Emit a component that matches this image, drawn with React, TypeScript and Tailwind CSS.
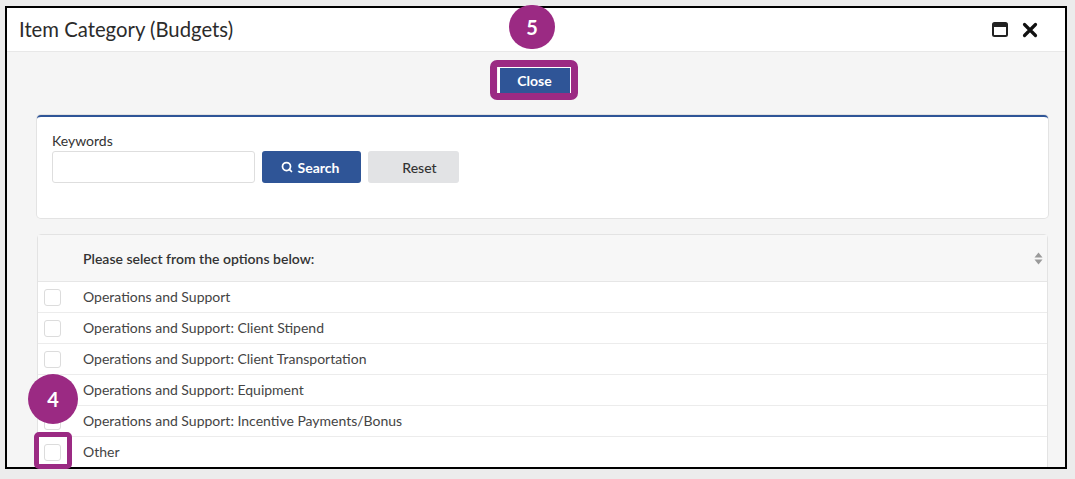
import { Search } from 'lucide-react';

const rows = [
  'Operations and Support',
  'Operations and Support: Client Stipend',
  'Operations and Support: Client Transportation',
  'Operations and Support: Equipment',
  'Operations and Support: Incentive Payments/Bonus',
  'Other',
];

function MaximizeIcon() {
  return (
    <svg width="16" height="15" viewBox="0 0 16 15" className="text-[#222]">
      <rect x="1" y="1" width="14" height="13" rx="1.5" fill="none" stroke="currentColor" strokeWidth="2" />
      <rect x="1" y="1" width="14" height="4" fill="currentColor" />
    </svg>
  );
}

function CloseIcon() {
  return (
    <svg width="16" height="16" viewBox="0 0 16 16" className="text-[#111]">
      <path d="M2.5 2.5 L13.5 13.5 M13.5 2.5 L2.5 13.5" stroke="currentColor" strokeWidth="3.2" strokeLinecap="round" />
    </svg>
  );
}

function SortIcon() {
  return (
    <svg width="9" height="13" viewBox="0 0 9 13" className="text-[#9a9a9a]">
      <path d="M4.5 0.5 L8.5 5.5 L0.5 5.5 Z" fill="currentColor" />
      <path d="M4.5 12.5 L8.5 7.5 L0.5 7.5 Z" fill="currentColor" />
    </svg>
  );
}

function Badge({ n, className }: { n: string; className: string }) {
  return (
    <div
      className={`absolute rounded-full bg-[#9b2a83] text-white flex items-center justify-center font-bold text-[20px] ${className}`}
    >
      {n}
    </div>
  );
}

export default function App() {
  return (
    <div
      className="relative w-[1075px] h-[479px] bg-[#ececec] overflow-hidden pt-[6px] pl-[5px]"
      style={{ fontFamily: 'Lato, "Noto Sans", sans-serif' }}
    >
      <div className="w-[1062px] h-[463px] border-2 border-black bg-white flex flex-col overflow-hidden">
        {/* header */}
        <div className="h-[44px] shrink-0 flex items-center justify-between pl-[12px] pr-[27px] border-b border-[#e8e8e8] bg-white">
          <h1 className="text-[20.3px] text-[#2b2b2b] leading-none pb-[1px]">Item Category (Budgets)</h1>
          <div className="flex items-center gap-[14px]">
            <MaximizeIcon />
            <CloseIcon />
          </div>
        </div>

        {/* body */}
        <div className="flex-1 bg-[#f5f5f5] pt-[16px]">
          <div className="flex justify-center pr-[3px]">
            <button className="w-[70px] h-[25px] bg-[#2f5597] text-white text-[14px] font-bold ring-2 ring-white leading-none">
              Close
            </button>
          </div>

          <div className="pl-[30px] pr-[17px]">
            <div className="mt-[22px] h-[103px] bg-white rounded-[4px] border-t-2 border-[#2f5597] shadow-[0_0_0_1px_#e3e3e3] px-[15px] pt-[14px]">
              <label className="block text-[14px] leading-[20px] text-[#333]">Keywords</label>
              <div className="flex items-center gap-[7px]">
                <input className="w-[203px] h-[32px] bg-white border border-[#dedede] rounded-[3px] outline-none" />
                <button className="w-[99px] h-[32px] bg-[#2f5597] rounded-[3px] text-white text-[14px] font-bold flex items-center justify-center gap-[5px] pr-[3px]">
                  <Search size={12} strokeWidth={3.5} />
                  Search
                </button>
                <button className="w-[91px] h-[32px] bg-[#e2e3e5] rounded-[3px] text-[#333] text-[14px] font-medium pl-[12px]">
                  Reset
                </button>
              </div>
            </div>

            <div className="mt-[16px] bg-white border border-[#e3e3e3] rounded-t-[4px]">
              <div className="h-[47px] flex items-center bg-[#f7f7f7] border-b border-[#e6e6e6] pr-[4px]">
                <div className="w-[45px] shrink-0" />
                <div className="flex-1 text-[14px] font-semibold text-[#333]">Please select from the options below:</div>
                <SortIcon />
              </div>
              {rows.map(r => (
                <div key={r} className="h-[31px] flex items-center border-b border-[#ececec]">
                  <div className="w-[45px] shrink-0 pl-[6px]">
                    <div className="w-[17px] h-[17px] rounded-[3px] border border-[#dcdcdc] bg-white" />
                  </div>
                  <div className="text-[14px] text-[#444] pb-[1px]">{r}</div>
                </div>
              ))}
            </div>
          </div>
        </div>
      </div>

      {/* annotations */}
      <Badge n="5" className="left-[509px] top-[5px] w-[46px] h-[44px]" />
      <div className="absolute left-[490px] top-[60px] w-[88px] h-[40px] border-[7px] border-[#9b2a83] rounded-[7px]" />
      <Badge n="4" className="left-[28px] top-[374px] w-[50px] h-[50px]" />
      <div className="absolute left-[34px] top-[432px] w-[38px] h-[37px] border-[5px] border-[#9b2a83] rounded-[5px]" />
    </div>
  );
}
